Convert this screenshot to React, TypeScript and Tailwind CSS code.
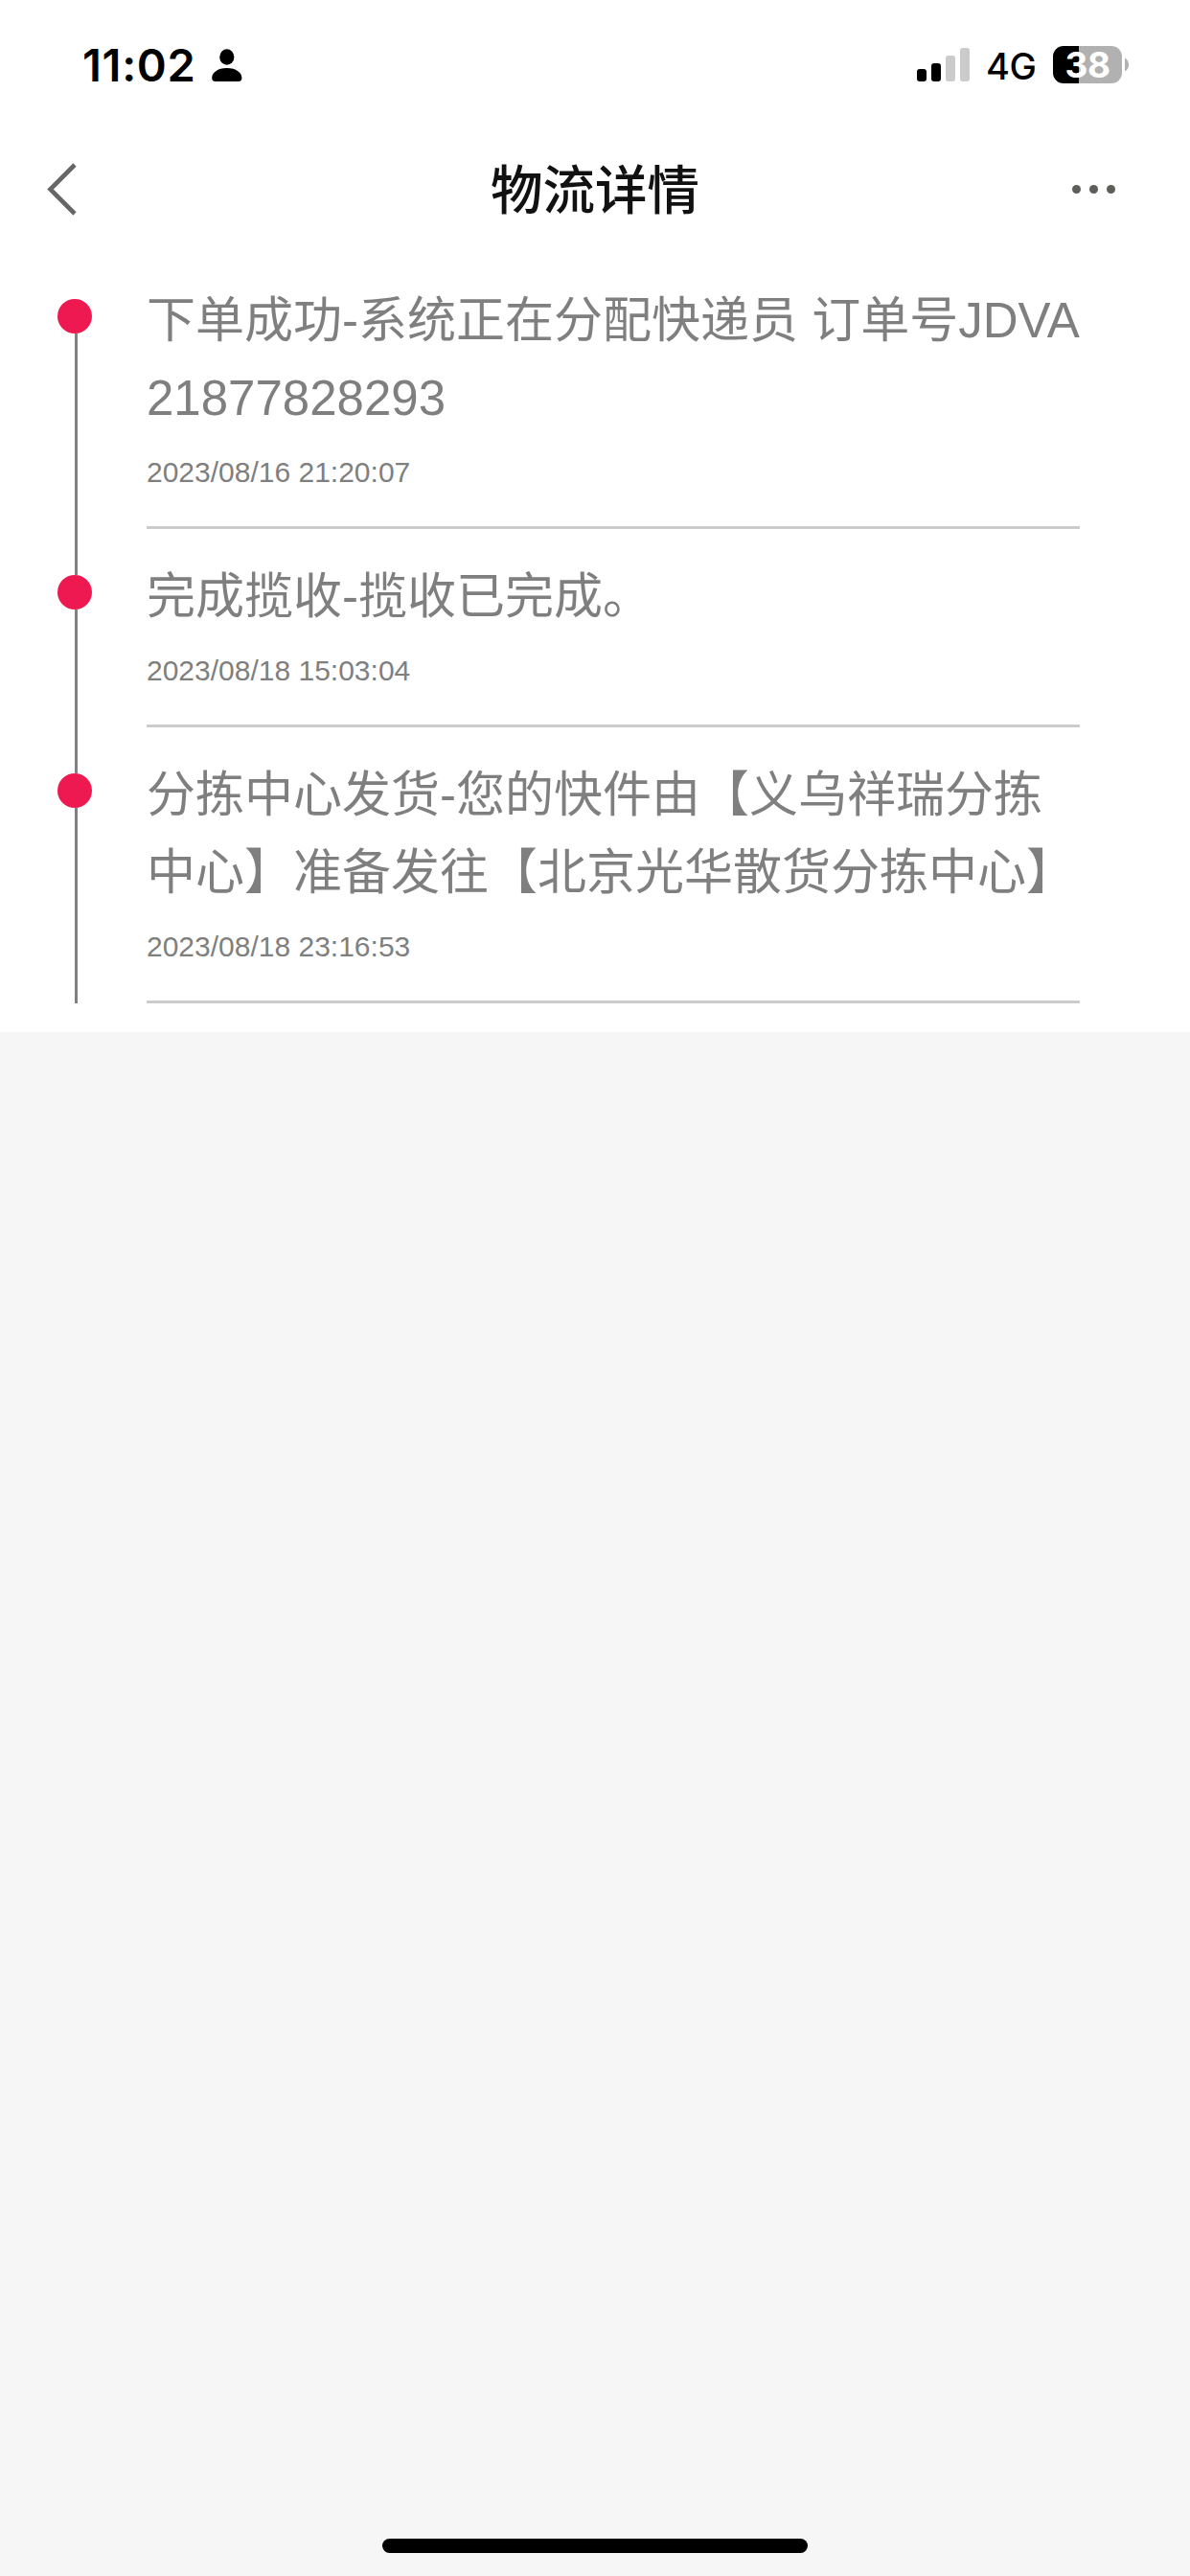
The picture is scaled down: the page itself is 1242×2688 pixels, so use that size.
import React from 'react';

type TrackingEvent = { lines: string[]; time: string };

const EVENTS: TrackingEvent[] = [
  { lines: ['下单成功-系统正在分配快递员 订单号JDVA', '21877828293'], time: '2023/08/16 21:20:07' },
  { lines: ['完成揽收-揽收已完成。'], time: '2023/08/18 15:03:04' },
  {
    lines: ['分拣中心发货-您的快件由【义乌祥瑞分拣', '中心】准备发往【北京光华散货分拣中心】'],
    time: '2023/08/18 23:16:53',
  },
];

function StatusBar() {
  return (
    <div className="flex h-[132px] items-start justify-between pl-[86px] pr-[64px] pt-12 font-['Inter',sans-serif] text-black">
      <div className="flex h-10 items-center">
        <span className="w-[135px] whitespace-nowrap text-[47px] font-semibold leading-10 tracking-[0.7px]">11:02</span>
        <svg className="h-10 w-8" viewBox="0 0 32 40">
          <ellipse cx="15.8" cy="11.5" rx="7.6" ry="8.3" />
          <path d="M0.2 33C0.2 28 6 23 15.8 23S31.4 28 31.4 33c0 2.6-1 4-3.6 4h-24c-2.6 0-3.6-1.4-3.6-4z" />
        </svg>
      </div>
      <div className="flex h-[39px] items-center">
        <svg className="h-[39px] w-[55px]" viewBox="0 0 55 39">
          <rect x="0" y="24" width="10" height="13" rx="3" />
          <rect x="15" y="18" width="10" height="19" rx="3" />
          <rect x="30" y="10" width="10" height="27" rx="3" fill="#cbcbcb" />
          <rect x="45" y="2" width="10" height="35" rx="3" fill="#cbcbcb" />
        </svg>
        <span className="ml-[17px] w-[70px] whitespace-nowrap pt-[3px] text-[38px] font-medium leading-9 tracking-[-0.5px]">4G</span>
        <div className="flex h-[39px] w-[72px] items-center justify-center rounded-[11px] bg-[linear-gradient(to_right,#000_27px,#b1b1b1_27px)]">
          <span className="text-[37px] font-bold leading-[39px] tracking-[-0.5px] text-white">38</span>
        </div>
        <svg className="ml-[3px] h-[15px] w-1" viewBox="0 0 4 15">
          <path d="M0 0.5C2.5 1.7 4 4.3 4 7.5S2.5 13.3 0 14.5z" fill="#b1b1b1" />
        </svg>
      </div>
    </div>
  );
}

function Header() {
  return (
    <header className="flex h-[132px] items-center justify-between pl-[48px] pr-[78px]">
      <svg className="h-[56px] w-[116px]" viewBox="0 0 116 56" fill="none" stroke="#666" strokeWidth="4.6">
        <path d="M30 2L4.5 27.5L30 53" />
      </svg>
      <h1 className="whitespace-nowrap pb-[6px] font-['Noto_Sans_CJK_SC',sans-serif] text-[54.5px] font-medium leading-[80px] text-[#111]">
        物流详情
      </h1>
      <div className="flex w-[86px] items-center justify-end gap-[9px] pb-px">
        <span className="size-[9px] rounded-full bg-[#5d5e59]" />
        <span className="size-[9px] rounded-full bg-[#5d5e59]" />
        <span className="size-[9px] rounded-full bg-[#5d5e59]" />
      </div>
    </header>
  );
}

function TimelineItem({ event, first }: { event: TrackingEvent; first: boolean }) {
  return (
    <li className="flex">
      <div className="flex w-[36px] flex-col items-center">
        <span className={first ? 'h-12 w-[3px]' : 'ml-[3px] h-12 w-[3px] bg-[#808080]'} />
        <span className="size-9 shrink-0 rounded-full bg-[#ed1950]" />
        <span className="ml-[3px] w-[3px] grow bg-[#808080]" />
      </div>
      <div className="ml-[57px] w-[974px] border-b-[3px] border-[#ccc] pt-[30px] text-[#7f7f7f]">
        <div className="whitespace-nowrap text-[51px] leading-[81px]">
          {event.lines.map((line) => (
            <p key={line} className="h-[81px]">{line}</p>
          ))}
        </div>
        <p className="h-[93px] pt-[16px] text-[30px] leading-[42px]">{event.time}</p>
      </div>
    </li>
  );
}

export default function App() {
  return (
    <div className="flex h-[2688px] w-[1242px] flex-col overflow-hidden bg-[#f6f6f6] font-['Liberation_Sans','Noto_Sans_CJK_SC',sans-serif]">
      <div className="h-[1077px] bg-white">
        <StatusBar />
        <Header />
        <ul className="pl-[60px]">
          {EVENTS.map((event, i) => (
            <TimelineItem key={event.time} event={event} first={i === 0} />
          ))}
        </ul>
      </div>
      <div className="mx-auto mb-6 mt-auto h-[15px] w-[444px] rounded-full bg-black" />
    </div>
  );
}
